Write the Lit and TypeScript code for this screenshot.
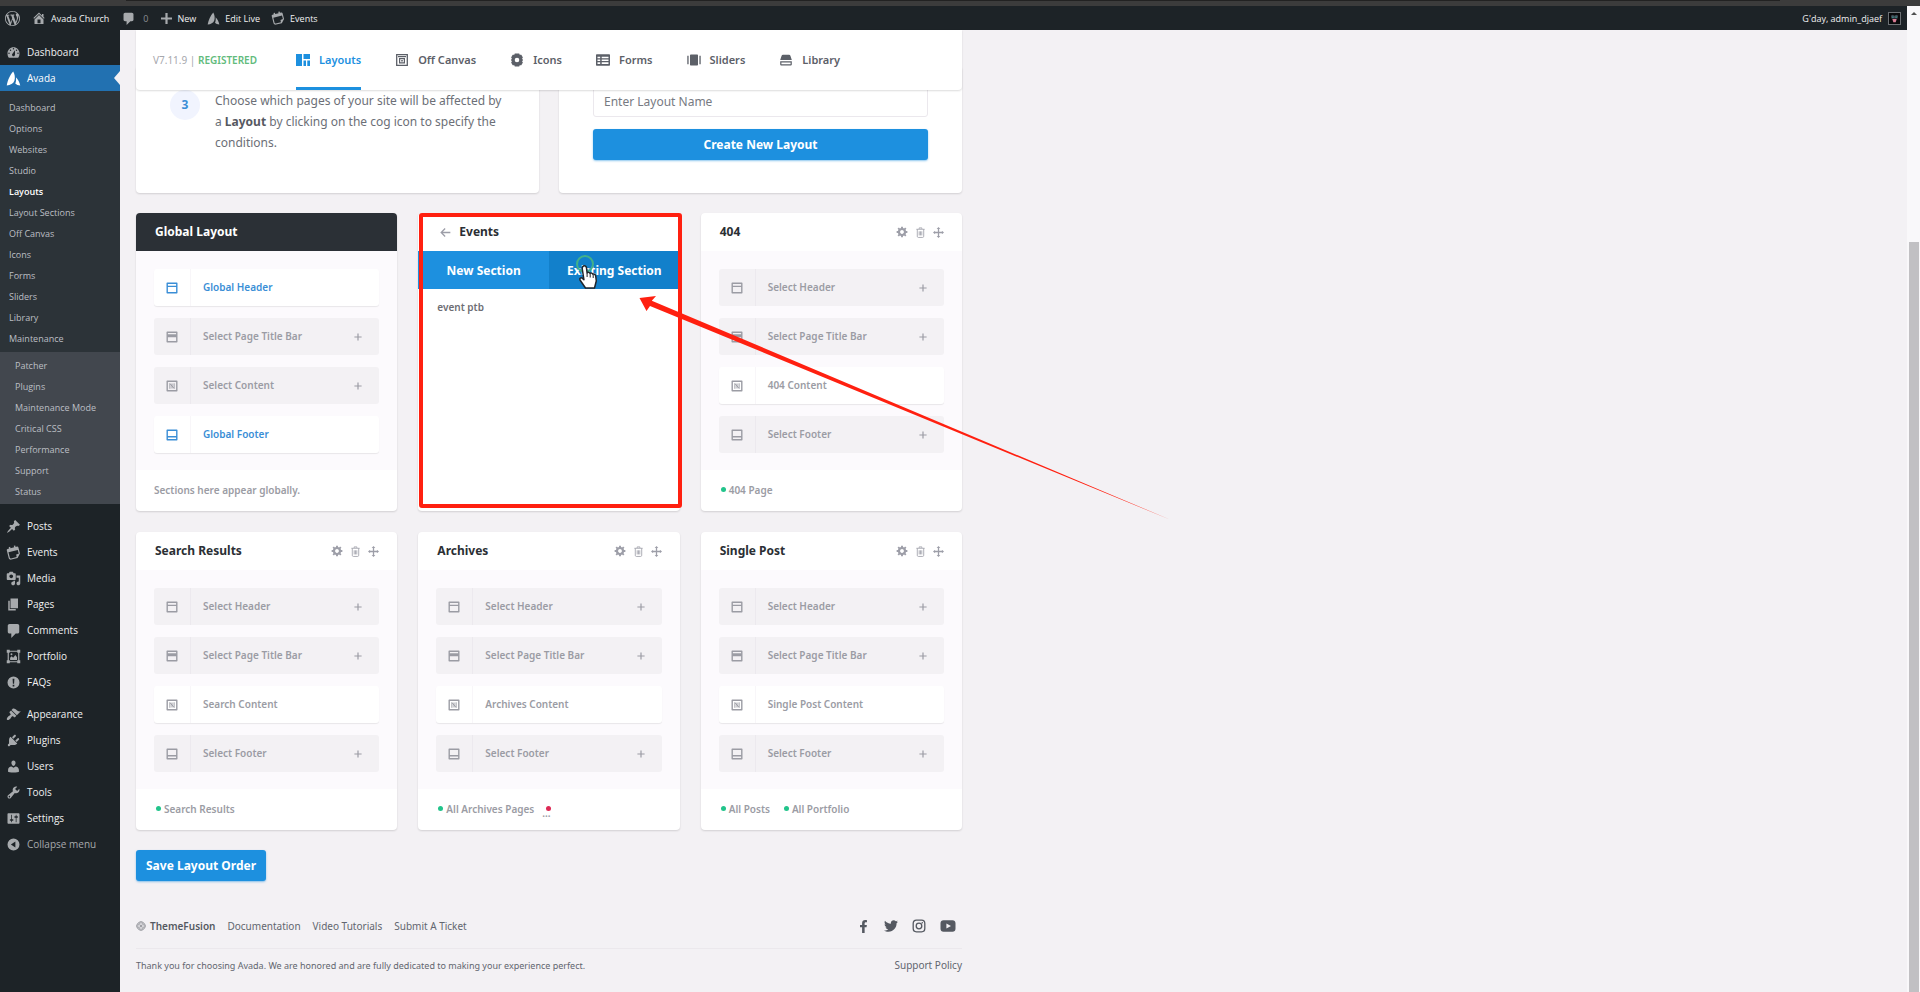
import { LitElement, html, css, svg, nothing } from "lit";
import type { SVGTemplateResult } from "lit";
import { customElement, property } from "lit/decorators.js";
import { classMap } from "lit/directives/class-map.js";

const glyphs: Record<string, [string, SVGTemplateResult]> = {
  wordpress: ["0 0 20 20", svg`<path d="M20 10c0-5.51-4.49-10-10-10C4.48 0 0 4.49 0 10c0 5.52 4.48 10 10 10 5.51 0 10-4.48 10-10zM7.78 15.37L4.37 6.22c.55-.02 1.17-.08 1.17-.08.5-.06.44-1.13-.06-1.11 0 0-1.45.11-2.37.11-.18 0-.37 0-.58-.01C4.12 2.69 6.87 1.11 10 1.11c2.33 0 4.45.87 6.05 2.34-.68-.11-1.65.39-1.65 1.58 0 .74.45 1.36.9 2.1.35.61.55 1.36.55 2.46 0 1.49-1.4 5-1.4 5l-3.03-8.37c.54-.02.82-.17.82-.17.5-.05.44-1.25-.06-1.22 0 0-1.44.12-2.38.12-.87 0-2.33-.12-2.33-.12-.5-.03-.56 1.2-.06 1.22l.92.08 1.26 3.41zM17.41 10c.24-.64.74-1.87.43-4.25.7 1.29 1.05 2.71 1.05 4.25 0 3.29-1.73 6.24-4.4 7.78.97-2.59 1.94-5.2 2.92-7.78zM6.1 18.09C3.12 16.65 1.11 13.53 1.11 10c0-1.3.23-2.48.72-3.59C3.25 10.3 4.67 14.2 6.1 18.09zm4.03-6.63l2.58 6.98c-.86.29-1.76.45-2.71.45-.79 0-1.57-.11-2.29-.33.81-2.38 1.62-4.74 2.42-7.1z"/>`],
  home: ["2 2 16 16", svg`<path d="M16 8.5l1.53 1.53-1.06 1.06L10 4.6l-6.47 6.49-1.06-1.06L10 2.5l4 4v-2h2v4zm-6-2.46l6 5.99V18H4v-5.97zM12 17v-5H8v5h4z"/>`],
  bubble: ["2 1 15 17", svg`<path d="M5 2h9q.82 0 1.41.59T16 4v7q0 .82-.59 1.41T14 13h-2l-5 5v-5H5q-.82 0-1.41-.59T3 11V4q0-.82.59-1.41T5 2z"/>`],
  plusBold: ["3 3 14 14", svg`<path d="M17 8.6v2.800h-5.600V17H8.600v-5.600H3V8.600h5.600V3h2.800v5.600z"/>`],
  avada: ["0 0 20 20", svg`<path d="M1 19.300C2.200 12.500 5.500 5 9.600.8c2 3 3 8.200 1.600 12.200C9.800 16.800 5.800 18.800 1 19.300zM13.200 8.200c2.800 2.600 5 6.800 5.800 11.100-2.800-.2-5-.9-6.600-2.700 1.100-2.600 1.300-5.600.8-8.400z"/>`],
  events: ["0 0 20 20", svg`<g transform="rotate(-14 10 10)"><path fill-rule="evenodd" d="M3.500 3.500h2V1.500h2v2h5V1.500h2v2h2c.8 0 1.500.7 1.500 1.500v8.500l-4.500 5H5c-1.700 0-3-1.300-3-3V5c0-.8.7-1.500 1.500-1.500zM3.600 8v7.500c0 .8.6 1.400 1.400 1.400h7.600l.2-3.400 3.600-.3V8z"/></g>`],
  dashboard: ["0 0 20 20", svg`<path fill-rule="evenodd" d="M3.760 17h12.480c1.340-1.630 1.760-3.710 1.760-6 0-4.420-3.580-8-8-8s-8 3.580-8 8c0 2.290.42 4.370 1.760 6zM10 4c.55 0 1 .45 1 1s-.45 1-1 1-1-.45-1-1 .45-1 1-1zM6 6c.55 0 1 .45 1 1s-.45 1-1 1-1-.45-1-1 .45-1 1-1zm8 0c.55 0 1 .45 1 1s-.45 1-1 1-1-.45-1-1 .45-1 1-1zm-5.370 5.550L12 7v6c0 1.100-.9 2-2 2s-2-.9-2-2c0-.57.24-1.080.63-1.450zM4 10c.55 0 1 .45 1 1s-.45 1-1 1-1-.45-1-1 .45-1 1-1zm12 0c.55 0 1 .45 1 1s-.45 1-1 1-1-.45-1-1 .45-1 1-1z"/>`],
  pin: ["0 0 20 20", svg`<path d="M10.440 3.020l1.820-1.820 6.360 6.350-1.830 1.820c-1.050-.68-2.480-.57-3.410.36l-.75.75c-.92.93-1.040 2.350-.35 3.410l-1.830 1.820-2.410-2.410-2.800 2.790c-.42.42-3.380 2.710-3.800 2.290s1.860-3.390 2.280-3.810l2.790-2.790L4.100 9.360l1.830-1.820c1.050.69 2.480.57 3.400-.36l.75-.75c.93-.92 1.050-2.350.36-3.410z"/>`],
  media: ["0 0 20 20", svg`<path fill-rule="evenodd" d="M13 11V4c0-.55-.45-1-1-1h-1.670L9 1H5L3.670 3H2c-.55 0-1 .45-1 1v7c0 .55.45 1 1 1h10c.55 0 1-.45 1-1zM7 4.500c1.380 0 2.500 1.120 2.500 2.500S8.380 9.500 7 9.500 4.500 8.380 4.500 7 5.620 4.500 7 4.500zM14 6h5v10.500c0 1.380-1.120 2.500-2.500 2.500S14 17.880 14 16.500s1.120-2.500 2.500-2.500c.17 0 .34.02.5.05V9h-3V6zm-4 8.050V13h2v3.500c0 1.380-1.120 2.500-2.500 2.500S7 17.880 7 16.500 8.120 14 9.500 14c.17 0 .34.02.5.05z"/>`],
  page: ["0 0 20 20", svg`<path d="M6 15V2h10v13H6zm-1 1h8v2H3V5h2v11z"/>`],
  portfolio: ["0 0 20 20", svg`<path fill-rule="evenodd" d="M1 1h4v1.200h10V1h4v4h-1.200v10H19v4h-4v-1.200H5V19H1v-4h1.200V5H1zm4 2.800V5H3.800v10H5v1.200h10V15h1.200V5H15V3.800z"/><path d="M5.500 14.500v-3l2-2 2 2 3-3.500 2.200 3v3.500z"/><circle cx="7.300" cy="7" r="1.300"/>`],
  info: ["0 0 20 20", svg`<path fill-rule="evenodd" d="M10 2a8 8 0 1 0 0 16 8 8 0 0 0 0-16zM8.800 5h2.400l-.4 6.500H9.200zM8.900 13h2.200v2.200H8.900z"/>`],
  brush: ["0 0 20 20", svg`<path d="M14.480 11.060L7.410 3.990l1.500-1.500c.5-.56 2.300-.47 3.510.32 1.210.8 1.430 1.280 2.910 2.100 1.180.64 2.450 1.260 4.450.85zm-.71.71L6.700 4.700 4.930 6.470c-.39.39-.39 1.020 0 1.410l1.060 1.060c.39.39.39 1.030 0 1.420-.6.6-1.430 1.110-2.210 1.690-.35.26-.7.53-1.010.84C1.430 14.230.4 16.080 1.400 17.070c.99 1 2.840-.03 4.180-1.360.31-.31.58-.66.85-1.020.57-.78 1.080-1.610 1.690-2.210.39-.39 1.020-.39 1.410 0l1.060 1.060c.39.39 1.020.39 1.410 0z"/>`],
  plug: ["0 0 20 20", svg`<path d="M13.110 4.360L9.870 7.600 8 5.730l3.240-3.240c.35-.34 1.050-.2 1.560.32.52.51.66 1.210.31 1.550zm-8 1.770l.91-1.120 9.010 9.010-1.190.84c-.71.71-2.630 1.160-3.820 1.160H6.140L4.900 17.260c-.59.59-1.540.59-2.120 0-.59-.58-.59-1.530 0-2.120l1.240-1.240v-3.880c0-1.130.4-3.190 1.090-3.890zm7.260 3.970l3.240-3.240c.34-.35 1.040-.21 1.550.31.52.51.66 1.210.31 1.550l-3.240 3.250z"/>`],
  user: ["0 0 20 20", svg`<path d="M10 9.250c-2.270 0-2.730-3.440-2.730-3.440C7 4.020 7.820 2 9.970 2c2.160 0 2.980 2.020 2.710 3.810 0 0-.41 3.440-2.680 3.440zm0 2.570L12.720 10c2.390 0 4.520 2.330 4.520 4.530v2.490s-3.650 1.130-7.240 1.130c-3.650 0-7.240-1.130-7.240-1.130v-2.490c0-2.250 1.940-4.480 4.470-4.480z"/>`],
  wrench: ["0 0 20 20", svg`<path fill-rule="evenodd" d="M16.680 9.770c-1.340 1.340-3.300 1.670-4.950.99l-5.410 6.520c-.99.99-2.590.99-3.580 0s-.99-2.590 0-3.570l6.520-5.420c-.68-1.650-.35-3.610.99-4.950 1.280-1.280 3.120-1.620 4.720-1.060l-2.890 2.890 2.820 2.820 2.860-2.870c.53 1.580.18 3.390-1.080 4.650zM3.810 16.210c.4.39 1.040.39 1.430 0 .4-.4.4-1.040 0-1.430-.39-.4-1.030-.4-1.430 0-.39.39-.39 1.030 0 1.430z"/>`],
  sliders: ["0 0 20 20", svg`<path fill-rule="evenodd" d="M18 16V4c0-.55-.45-1-1-1H3c-.55 0-1 .45-1 1v12c0 .55.45 1 1 1h14c.55 0 1-.45 1-1zM8 11h1c.55 0 1 .45 1 1s-.45 1-1 1H8v1.500c0 .28-.22.5-.5.5s-.5-.22-.5-.5V13H6c-.55 0-1-.45-1-1s.45-1 1-1h1V5.500c0-.28.22-.5.5-.5s.5.22.5.5V11zm5-2h-1c-.55 0-1-.45-1-1s.45-1 1-1h1V5.500c0-.28.22-.5.5-.5s.5.22.5.5V7h1c.55 0 1 .45 1 1s-.45 1-1 1h-1v5.500c0 .28-.22.5-.5.5s-.5-.22-.5-.5V9z"/>`],
  collapse: ["0 0 20 20", svg`<path fill-rule="evenodd" d="M10 2a8 8 0 1 0 0 16 8 8 0 0 0 0-16zm2.500 4v8L6.500 10z"/>`],

  tabLayouts: ["0 0 14 12", svg`<path d="M0 0h6v12H0zM7.500 0H14v5H7.500zM7.500 6.500h2.500V12H7.500zM11.300 6.500H14V12h-2.700z"/>`],
  tabCanvas: ["0 0 14 12", svg`<path fill="none" stroke="currentColor" stroke-width="1.300" d="M1.700.7h10.600v10.600H1.700z"/><path d="M3 2h8v1.200H3z"/><path fill="none" stroke="currentColor" stroke-width="1.200" d="M4.600 4.600h4.800v4.200H4.600z"/><path d="M6.200 6h1.600v1.400H6.200z"/>`],
  tabIcons: ["0 0 14 14", svg`<path fill-rule="evenodd" d="M4.800.5h4.400l.5 1.300 1.600-.1 1.600 2.700-.8 1.200.9 1.400-.9 1.400.8 1.200-1.600 2.700-1.600-.1-.5 1.300H4.800l-.5-1.300-1.600.1L1.100 9.600l.8-1.200L1 7l.9-1.400-.8-1.200 1.600-2.700 1.600.1zM7 4.700a2.300 2.300 0 1 0 0 4.600 2.300 2.300 0 0 0 0-4.600z"/>`],
  tabForms: ["0 0 14 12", svg`<path fill-rule="evenodd" d="M1 .3h12c.6 0 1 .4 1 1v9.400c0 .6-.4 1-1 1H1c-.6 0-1-.4-1-1V1.300c0-.6.4-1 1-1zM1.500 2.800v1.500h2.700V2.800zm4.200 0v1.500h6.800V2.800zM1.500 5.500V7h2.700V5.500zm4.200 0V7h6.800V5.500zM1.500 8.300v1.800h2.700V8.300zm4.200 0v1.800h6.800V8.300z"/>`],
  tabSliders: ["0 0 14 12", svg`<path d="M3 1.400C3 .8 3.500.4 4 .4h6c.6 0 1 .4 1 1v9.200c0 .6-.4 1-1 1H4c-.6 0-1-.4-1-1zM.3 1.800h1.300v8.400H.3zM12.400 1.800h1.300v8.400h-1.300z"/>`],
  tabLibrary: ["0 0 14 12", svg`<path fill-rule="evenodd" d="M4 .8h6c.7 0 1.200.3 1.400 1L12.800 6H1.200L2.600 1.800c.2-.7.700-1 1.400-1zM1.200 7.200h11.600v3.300c0 .5-.4.9-.9.9H2.100c-.5 0-.9-.4-.9-.9zm1.200 1.200v1.800h9.200V8.400z"/>`],

  header: ["0 0 12 12", svg`<path fill="none" stroke="currentColor" stroke-width="1.400" stroke-linejoin="round" d="M1.200 1.200h9.600v9.600H1.200zM1.200 4.400h9.600"/>`],
  titleBar: ["0 0 12 12", svg`<path fill="none" stroke="currentColor" stroke-width="1.400" stroke-linejoin="round" d="M1.200 1.200h9.600v9.600H1.200z"/><path d="M1.200 3.300h9.600v3H1.200z"/>`],
  content: ["0 0 12 12", svg`<path fill="none" stroke="currentColor" stroke-width="1.400" stroke-linejoin="round" d="M1.200 1.200h9.600v9.600H1.200z"/><path fill="none" stroke="currentColor" d="M3.900 8.800V3.500L8.100 8.500V3.300M6 3.500v5"/>`],
  footer: ["0 0 12 12", svg`<path fill="none" stroke="currentColor" stroke-width="1.400" stroke-linejoin="round" d="M1.200 1.200h9.600v9.600H1.200zM1.200 7.700h9.600"/>`],
  add: ["0 0 12 12", svg`<path d="M5.400 2.400h1.200v3h3v1.200h-3v3H5.400v-3h-3V5.400h3z"/>`],
  gear: ["0 1 19 19", svg`<path fill-rule="evenodd" d="M18 12h-2.180c-.17.7-.44 1.350-.81 1.930l1.540 1.540-2.100 2.100-1.540-1.540c-.58.36-1.230.63-1.910.79V19H8v-2.180c-.68-.16-1.330-.43-1.910-.79l-1.540 1.540-2.120-2.120 1.540-1.540c-.36-.58-.63-1.230-.79-1.910H1V9.030h2.170c.16-.7.44-1.350.8-1.940L2.430 5.550l2.100-2.100 1.540 1.540c.58-.37 1.240-.64 1.930-.81V2h3v2.180c.68.16 1.330.43 1.910.79l1.540-1.540 2.120 2.120-1.540 1.540c.36.59.64 1.240.8 1.940H18V12zm-8.500 1.500c1.660 0 3-1.340 3-3s-1.340-3-3-3-3 1.340-3 3 1.340 3 3 3z"/>`],
  trash: ["0 0 12 12", svg`<path fill="none" stroke="currentColor" stroke-width=".9" d="M4.500 2V1h3v1M1.500 2.500h9M2.500 2.500v7.700c0 .7.500 1.200 1.200 1.200h4.600c.7 0 1.200-.5 1.200-1.200V2.500M4.600 4.700v4.500M6 4.700v4.500M7.400 4.700v4.500"/>`],
  move: ["0 0 12 12", svg`<path d="M6 0l2 2.300H6.700v3h3V4L12 6 9.700 8V6.700h-3v3H8L6 12 4 9.700h1.300v-3h-3V8L0 6l2.300-2v1.300h3v-3H4z"/>`],
  back: ["0 0 12 12", svg`<path fill="none" stroke="currentColor" stroke-width="1.400" d="M11.300 6H1.400M5.600 1.700L1.300 6l4.300 4.300"/>`],

  fusion: ["0 0 12 12", svg`<g opacity=".7"><circle cx="6" cy="6" r="5" fill="none" stroke="currentColor" stroke-width=".9"/><ellipse cx="6" cy="6" rx="2.500" ry="5" fill="none" stroke="currentColor" stroke-width=".7"/><ellipse cx="6" cy="6" rx="5" ry="2.500" fill="none" stroke="currentColor" stroke-width=".7"/><circle cx="6" cy="6" r="1.200"/></g>`],
  facebook: ["-96 0 512 512", svg`<path d="M279.140 288l14.220-92.660h-88.910v-60.130c0-25.350 12.420-50.060 52.240-50.060h40.420V6.260S260.430 0 225.360 0c-73.220 0-121.080 44.380-121.080 124.720v70.620H22.890V288h81.390v224h100.170V288z"/>`],
  twitter: ["0 0 512 512", svg`<path d="M459.370 151.716c.325 4.548.325 9.097.325 13.645 0 138.720-105.583 298.558-298.558 298.558-59.452 0-114.680-17.219-161.137-47.106 8.447.974 16.568 1.299 25.340 1.299 49.055 0 94.213-16.568 130.274-44.832-46.132-.975-84.792-31.188-98.112-72.772 6.498.974 12.995 1.624 19.818 1.624 9.421 0 18.843-1.300 27.614-3.573-48.081-9.747-84.143-51.980-84.143-102.985v-1.299c13.969 7.797 30.214 12.670 47.431 13.319-28.264-18.843-46.781-51.005-46.781-87.391 0-19.492 5.197-37.360 14.294-52.954 51.655 63.675 129.300 105.258 216.365 109.807-1.624-7.797-2.599-15.918-2.599-24.040 0-57.828 46.782-104.934 104.934-104.934 30.213 0 57.502 12.670 76.670 33.137 23.715-4.548 46.456-13.320 66.599-25.340-7.798 24.366-24.366 44.833-46.132 57.827 21.117-2.273 41.584-8.122 60.426-16.243-14.292 20.791-32.161 39.308-52.628 54.253z"/>`],
  instagram: ["0 0 14 14", svg`<rect x="1.200" y="1.200" width="11.600" height="11.600" rx="3.200" fill="none" stroke="currentColor" stroke-width="1.300"/><circle cx="7" cy="7" r="2.800" fill="none" stroke="currentColor" stroke-width="1.300"/><circle cx="10.300" cy="3.700" r=".8"/>`],
  youtube: ["0 0 16 14" , svg`<path fill-rule="evenodd" d="M3.500 1.300h9c1.800 0 3 1.200 3 3v5.400c0 1.800-1.200 3-3 3h-9c-1.800 0-3-1.200-3-3V4.300c0-1.800 1.200-3 3-3zM6.400 4.400v5.200L11 7z"/>`],
};

const icon = (name: string, size = 12) => {
  const [box, shape] = glyphs[name];
  return html`<svg class="icon" width=${size} height=${size} viewBox=${box} fill="currentColor" aria-hidden="true">${shape}</svg>`;
};

interface Slot {
  icon: string;
  label: string;
  kind: "empty" | "filled" | "global";
}

const slots = (content: string, header = "", footer = ""): Slot[] => [
  { icon: "header", label: header || "Select Header", kind: header ? "global" : "empty" },
  { icon: "titleBar", label: "Select Page Title Bar", kind: "empty" },
  { icon: "content", label: content || "Select Content", kind: content ? "filled" : "empty" },
  { icon: "footer", label: footer || "Select Footer", kind: footer ? "global" : "empty" },
];

@customElement("layout-card")
class LayoutCard extends LitElement {
  @property() heading = "";
  @property({ type: Boolean }) dark = false;
  @property({ type: Boolean }) excluded = false;
  @property({ attribute: false }) slots: Slot[] = [];
  @property({ attribute: false }) conditions: string[] = [];

  static styles = css`
    :host {
      display: flex;
      flex-direction: column;
      background: #fff;
      border-radius: 4px;
      overflow: hidden;
      box-shadow: 0 1px 2px rgba(0, 0, 0, 0.14);
    }
    .icon { display: block; flex: none; }
    button { font: inherit; color: inherit; background: none; border: 0; padding: 0; margin: 0; cursor: pointer; }
    header {
      display: flex;
      align-items: center;
      justify-content: space-between;
      height: 38px;
      padding: 0 18px 0 19px;
    }
    h2 { margin: 0; font-size: 12px; font-weight: 700; line-height: 20px; color: #2b2f34; }
    header.dark { background: #2b3036; }
    header.dark h2 { color: #fff; }
    .tools { display: flex; gap: 7px; color: #9d9ea8; }
    .body {
      display: flex;
      flex-direction: column;
      gap: 12px;
      padding: 18px 18px 17px;
      background: #fcfafd;
      flex: 1;
    }
    .slot {
      display: flex;
      align-items: center;
      height: 37px;
      padding: 0 15px 0 0;
      border-radius: 3px;
      background: #f3f1f4;
      color: #9b9ca4;
      font-size: 10px;
      font-weight: 600;
      line-height: 14px;
      text-align: left;
    }
    .slot.filled, .slot.global { background: #fff; box-shadow: 0 1px 1px rgba(0, 0, 0, 0.08); }
    .slot.global { color: #3a8ed6; }
    .mark {
      display: flex;
      align-items: center;
      justify-content: center;
      align-self: stretch;
      width: 36px;
      border-right: 1px solid #ece9ee;
    }
    .filled .mark, .global .mark { border-color: #f8f6f9; }
    .label { flex: 1; padding: 0 0 2px 12px; }
    footer {
      display: flex;
      align-items: center;
      gap: 12px;
      height: 41px;
      padding: 0 18px 2px;
      box-sizing: border-box;
      color: #9b9ca4;
      font-size: 10px;
      font-weight: 600;
      line-height: 14px;
    }
    .condition { display: flex; align-items: center; gap: 3px; padding-left: 2px; }
    .dot { width: 5px; height: 5px; border-radius: 50%; background: #22c48b; }
    .more { position: relative; margin-left: -4px; padding-top: 8px; }
    .more .dot { position: absolute; right: 0; top: 8px; background: #dd2a55; }
  `;

  render() {
    return html`
      <header class=${classMap({ dark: this.dark })}>
        <h2>${this.heading}</h2>
        ${this.dark ? nothing : html`
          <div class="tools">
            <button aria-label="Manage conditions">${icon("gear", 12)}</button>
            <button aria-label="Delete layout">${icon("trash", 11)}</button>
            <button aria-label="Move layout">${icon("move", 11)}</button>
          </div>`}
      </header>
      <div class="body">
        ${this.slots.map((s) => html`
          <button class=${"slot " + s.kind}>
            <span class="mark">${icon(s.icon)}</span>
            <span class="label">${s.label}</span>
            ${s.kind === "empty" ? icon("add") : nothing}
          </button>`)}
      </div>
      <footer>
        ${this.dark
          ? html`<span>Sections here appear globally.</span>`
          : this.conditions.map((c) => html`<span class="condition"><span class="dot"></span>${c}</span>`)}
        ${this.excluded ? html`<span class="more">...<span class="dot"></span></span>` : nothing}
      </footer>`;
  }
}

@customElement("section-picker")
class SectionPicker extends LitElement {
  static styles = css`
    :host {
      display: block;
      position: relative;
      z-index: 2;
      background: #fff;
      border-radius: 4px;
      box-shadow: 0 1px 2px rgba(0, 0, 0, 0.14);
    }
    .icon { display: block; }
    button { font: inherit; color: inherit; background: none; border: 0; padding: 0; cursor: pointer; }
    header { display: flex; align-items: center; gap: 8px; height: 38px; padding: 0 22px; color: #9d9ea8; }
    h2 { margin: 0; font-size: 12px; font-weight: 700; line-height: 20px; color: #2b2f34; }
    .tabs { display: grid; grid-template-columns: 1fr 1fr; height: 38px; color: #fff; font-size: 12px; font-weight: 700; }
    .tabs button { background: #1d90df; }
    .tabs .active { background: #1280cb; }
    .item { display: block; padding: 8px 19px; font-size: 10px; font-weight: 600; line-height: 20px; color: #6d6d73; }
    .frame { position: absolute; inset: 0 -2px 3px 1px; border: 4px solid #ff2010; border-radius: 3px; pointer-events: none; }
    .arrow { position: absolute; left: 0; top: 0; overflow: visible; pointer-events: none; }
  `;

  render() {
    return html`
      <header>
        <button aria-label="Back">${icon("back", 11)}</button>
        <h2>Events</h2>
      </header>
      <div class="tabs" role="tablist">
        <button role="tab" aria-selected="false">New Section</button>
        <button role="tab" aria-selected="true" class="active">Existing Section</button>
      </div>
      <button class="item">event ptb</button>
      <div class="frame"></div>
      <svg class="arrow" width="262" height="298" aria-hidden="true">
        <circle cx="167" cy="51" r="8" fill="none" stroke="#42b08a" stroke-width="2"/>
        <path fill="#fff" stroke="#20252b" stroke-width="1.500" stroke-linejoin="round"
          d="M165.500 53c1.500-.6 2.800.3 3 1.800l.6 5c1-.8 2.400-.5 2.900.6 1-.7 2.300-.3 2.800.9 1.200-.5 2.600.1 2.900 1.500l.6 5.200-1.800 7h-9l-5.500-8c-.8-1.500.8-3 2.500-1.600l1.400 1.300-1.700-11.200c-.1-1 .3-2 1.300-2.500z"/>
        <path fill="none" stroke="#20252b" d="M169.100 60v4M172.200 61v3.500M175.200 62v3"/>
        <path fill="#ff2010" d="M221.500 85l16.500-2-4.200 4.700L753 307 232 93l-3.500 5z"/>
      </svg>`;
  }
}

const pluginTabs = [
  ["tabLayouts", "Layouts"], ["tabCanvas", "Off Canvas"], ["tabIcons", "Icons"],
  ["tabForms", "Forms"], ["tabSliders", "Sliders"], ["tabLibrary", "Library"],
];
const avadaMenu = ["Dashboard", "Options", "Websites", "Studio", "Layouts", "Layout Sections", "Off Canvas", "Icons", "Forms", "Sliders", "Library", "Maintenance"];
const maintenanceMenu = ["Patcher", "Plugins", "Maintenance Mode", "Critical CSS", "Performance", "Support", "Status"];
const contentMenu = [["pin", "Posts"], ["events", "Events"], ["media", "Media"], ["page", "Pages"], ["bubble", "Comments"], ["portfolio", "Portfolio"], ["info", "FAQs"]];
const siteMenu = [["brush", "Appearance"], ["plug", "Plugins"], ["user", "Users"], ["wrench", "Tools"], ["sliders", "Settings"]];

@customElement("app-root")
class AppRoot extends LitElement {
  static styles = css`
    :host {
      display: flex;
      flex-direction: column;
      min-height: 100vh;
      background: #f3f1f4;
      color: #5c6068;
      font-family: "Noto Sans", "Open Sans", sans-serif;
      font-size: 12px;
    }
    * { box-sizing: border-box; }
    a { color: inherit; text-decoration: none; }
    ul { list-style: none; margin: 0; padding: 0; }
    button, input { font: inherit; color: inherit; margin: 0; }
    .icon { display: block; flex: none; }

    .strip { height: 6px; padding: 0 140px 0 126px; background: #3c3c3c; }
    .strip span { display: block; height: 1px; background: #222; }
    .shell { display: flex; flex: 1; }
    .page { flex: 1; min-width: 0; display: flex; flex-direction: column; }

    .adminbar {
      display: flex;
      align-items: center;
      height: 24px;
      padding: 0 6px 0 5px;
      background: #1d2327;
      color: #f0f0f1;
      font-family: "Open Sans", "Noto Sans", sans-serif;
      font-size: 9px;
    }
    .adminbar a { display: flex; align-items: center; gap: 6px; margin-right: 13px; }
    .adminbar a.plugin { gap: 5px; margin-right: 11px; }
    .adminbar .icon { color: #a7aaad; }
    .adminbar .dim { padding-left: 2px; color: #8c8f94; }
    .adminbar a.account { margin: 0 0 0 auto; gap: 6px; }
    .avatar { display: block; background: #08090b; border: 1px solid #6d7175; }

    .columns { display: flex; flex: 1; }
    .menu {
      width: 120px;
      flex: none;
      padding-top: 9px;
      background: #1d2327;
      color: #f0f0f1;
      font-family: "Open Sans", "Noto Sans", sans-serif;
      font-size: 10px;
    }
    .menu .entry { display: flex; align-items: center; gap: 6px; width: 100%; height: 26px; padding: 0 6px; border: 0; background: none; text-align: left; }
    .menu .entry .icon { color: #a7aaad; }
    .menu .current { position: relative; background: #2271b1; color: #fff; }
    .menu .current .icon { color: #fff; }
    .menu .current::after { content: ""; position: absolute; right: 0; top: 6px; border: 7px solid transparent; border-right: 6px solid #f3f1f4; border-left: 0; }
    .submenu { padding: 6px 9px 3px; background: #2c3338; color: #bcbfc4; font-size: 9px; line-height: 21px; }
    .submenu .selected { color: #fff; font-weight: 600; }
    .submenu.nested { padding: 3px 15px 2px; background: #42474e; }
    .group { padding-top: 9px; }
    .group + .group { padding-top: 6px; }
    .menu .quiet { color: #a7aaad; }

    main { flex: 1; min-width: 0; padding: 0 16px; }
    .wrap { max-width: 826px; }
    .tabbar {
      position: relative;
      z-index: 1;
      display: flex;
      align-items: stretch;
      gap: 39px;
      height: 60px;
      padding: 0 17px;
      background: #fff;
      border-radius: 0 0 4px 4px;
      box-shadow: 0 1px 2px rgba(0, 0, 0, 0.14);
    }
    .version { align-self: center; font-size: 10px; color: #a6a7ad; }
    .version strong { font-weight: 600; color: #62bb7c; }
    .tabs { display: flex; gap: 34px; font-size: 11px; font-weight: 600; }
    .tabs a { display: flex; align-items: center; gap: 9px; border-bottom: 3px solid transparent; padding-top: 2px; }
    .tabs .active { color: #1d90df; border-color: #1d90df; }

    .intro { display: grid; grid-template-columns: 1fr 1fr; gap: 20px; margin-top: -24px; }
    .panel { background: #fff; border-radius: 4px; box-shadow: 0 1px 2px rgba(0, 0, 0, 0.14); }
    .step { display: flex; gap: 15px; padding: 24px 34px 40px; }
    .step p { margin: 0; line-height: 21px; color: #6c6f77; }
    .step p strong { color: #565961; }
    .number { flex: none; width: 30px; height: 30px; border-radius: 50%; background: #f1f4fe; color: #3a8ed6; font-weight: 700; line-height: 30px; text-align: center; }
    .create { display: flex; flex-direction: column; gap: 12px; padding: 14px 34px 33px; }
    .create input { height: 37px; width: 100%; padding: 6px 10px 0; border: 1px solid #ebe8ed; border-radius: 3px; background: #fff; outline: 0; }
    .create input::placeholder { color: #777a82; opacity: 1; }
    .primary { height: 31px; border: 0; border-radius: 3px; background: #1d90df; color: #fff; font-weight: 700; padding: 0 10px; box-shadow: 0 1px 2px rgba(29, 144, 223, 0.5); cursor: pointer; }

    .cards { display: grid; grid-template-columns: repeat(3, 1fr); gap: 21px; margin: 20px 0; }

    .footer { margin-top: 27px; font-size: 10px; color: #62666f; }
    .line { display: flex; align-items: center; justify-content: space-between; }
    .links, .social { display: flex; align-items: center; }
    .links { gap: 12px; }
    .links .brand { display: flex; align-items: center; gap: 4px; font-weight: 600; color: #555961; }
    .social { gap: 14px; padding-right: 6px; color: #555961; }
    .line.top { height: 36px; }
    .line.bottom { margin-top: 4px; height: 33px; border-top: 1px solid #ebe8ec; }
    .thanks { font-size: 9px; }

    .scrollbar { flex: none; width: 13px; background: #f9f8fa; display: flex; flex-direction: column; align-items: center; padding-left: 1px; }
    .scrollbar .up { margin-top: 6px; border: 3px solid transparent; border-top: 0; border-bottom: 3px solid #505050; }
    .scrollbar .thumb { margin-top: 227px; width: 10px; flex: 1; background: #c1c0c3; }
  `;

  entry(name: string, label: string) {
    return html`<li><a class="entry" href="#">${icon(name, 15)}<span>${label}</span></a></li>`;
  }

  render() {
    return html`
      <div class="strip"><span></span></div>
      <div class="shell">
        <div class="page">
          <div class="adminbar">
            <a href="#" aria-label="About WordPress">${icon("wordpress", 15)}</a>
            <a href="#">${icon("home")}Avada Church</a>
            <a href="#">${icon("bubble", 13)}<span class="dim">0</span></a>
            <a class="plugin" href="#">${icon("plusBold", 11)}New</a>
            <a class="plugin" href="#">${icon("avada", 13)}Edit Live</a>
            <a class="plugin" href="#">${icon("events", 14)}Events</a>
            <a class="account" href="#">G'day, admin_djaef
              <svg class="avatar" width="13" height="13" viewBox="0 0 12 12" aria-hidden="true">
                <path fill="#3e4a52" d="M2 3l2-1 2 1 2-1 2 1-.6 3H2.600z"/>
                <path fill="#37b3b0" d="M3.300 4h1.800v1H3.300zM6.900 4h1.800v1H6.900z"/>
                <path fill="#d77b93" d="M3.600 6.500h4.800L7.300 10H4.700z"/>
              </svg>
            </a>
          </div>
          <div class="columns">
            <nav class="menu" aria-label="Main menu">
              <ul>
                ${this.entry("dashboard", "Dashboard")}
                <li><a class="entry current" href="#">${icon("avada", 15)}<span>Avada</span></a></li>
              </ul>
              <ul class="submenu">
                ${avadaMenu.map((m) => html`<li><a class=${classMap({ selected: m === "Layouts" })} href="#">${m}</a></li>`)}
              </ul>
              <ul class="submenu nested">${maintenanceMenu.map((m) => html`<li><a href="#">${m}</a></li>`)}</ul>
              <ul class="group">${contentMenu.map(([i, l]) => this.entry(i, l))}</ul>
              <ul class="group">
                ${siteMenu.map(([i, l]) => this.entry(i, l))}
                <li><button class="entry quiet">${icon("collapse", 15)}<span>Collapse menu</span></button></li>
              </ul>
            </nav>
            <main>
              <div class="wrap">
                <nav class="tabbar" aria-label="Avada">
                  <div class="version">V7.11.9 | <strong>REGISTERED</strong></div>
                  <div class="tabs">
                    ${pluginTabs.map(([i, l]) => html`<a class=${classMap({ active: l === "Layouts" })} href="#">${icon(i, 14)}${l}</a>`)}
                  </div>
                </nav>
                <section class="intro">
                  <div class="panel step">
                    <span class="number">3</span>
                    <p>Choose which pages of your site will be affected by a <strong>Layout</strong> by clicking on the cog icon to specify the conditions.</p>
                  </div>
                  <form class="panel create" @submit=${(e: Event) => e.preventDefault()}>
                    <input type="text" aria-label="Layout name" placeholder="Enter Layout Name">
                    <button class="primary">Create New Layout</button>
                  </form>
                </section>
                <section class="cards">
                  <layout-card dark heading="Global Layout" .slots=${slots("", "Global Header", "Global Footer")}></layout-card>
                  <section-picker></section-picker>
                  <layout-card heading="404" .slots=${slots("404 Content")} .conditions=${["404 Page"]}></layout-card>
                  <layout-card heading="Search Results" .slots=${slots("Search Content")} .conditions=${["Search Results"]}></layout-card>
                  <layout-card excluded heading="Archives" .slots=${slots("Archives Content")} .conditions=${["All Archives Pages"]}></layout-card>
                  <layout-card heading="Single Post" .slots=${slots("Single Post Content")} .conditions=${["All Posts", "All Portfolio"]}></layout-card>
                </section>
                <button class="primary">Save Layout Order</button>
                <footer class="footer">
                  <div class="line top">
                    <div class="links">
                      <a class="brand" href="#">${icon("fusion", 10)}ThemeFusion</a>
                      <a href="#">Documentation</a>
                      <a href="#">Video Tutorials</a>
                      <a href="#">Submit A Ticket</a>
                    </div>
                    <div class="social">
                      <a href="#" aria-label="Facebook">${icon("facebook", 13)}</a>
                      <a href="#" aria-label="Twitter">${icon("twitter", 14)}</a>
                      <a href="#" aria-label="Instagram">${icon("instagram", 14)}</a>
                      <a href="#" aria-label="YouTube">${icon("youtube", 16)}</a>
                    </div>
                  </div>
                  <div class="line bottom">
                    <span class="thanks">Thank you for choosing Avada. We are honored and are fully dedicated to making your experience perfect.</span>
                    <a href="#">Support Policy</a>
                  </div>
                </footer>
              </div>
            </main>
          </div>
        </div>
        <div class="scrollbar" aria-hidden="true"><span class="up"></span><span class="thumb"></span></div>
      </div>`;
  }
}
